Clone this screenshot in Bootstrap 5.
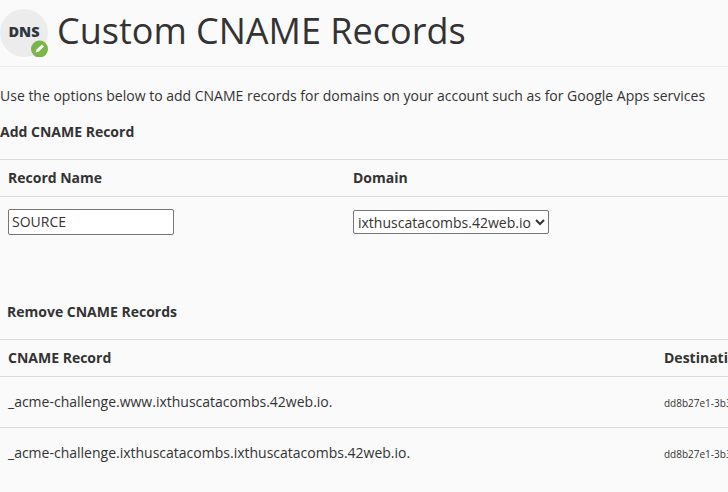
<!DOCTYPE html>
<html lang="en">
<head>
  <meta charset="UTF-8" />
  <meta name="viewport" content="width=device-width, initial-scale=1.0" />
  <title>Custom CNAME Records</title>
  <link href="https://cdn.jsdelivr.net/npm/bootstrap@5.3.0/dist/css/bootstrap.min.css" rel="stylesheet" />
  <style>
    html, body { height: 492px; overflow: hidden; }
    body { background: #fafafa; color: #333; font-family: "Open Sans", sans-serif; font-size: 14px; }
    .page-head { height: 67px; border-bottom: 1px solid #eaeaea; }
    .dns-logo { width: 48px; height: 48px; margin-top: 9px; position: relative; flex: none; }
    .page-title { font-family: "Open Sans", sans-serif; font-size: 36px; font-weight: 400; line-height: 45px; margin: 8px 0 0 9px; color: #333; }
    .intro { margin: 0; padding-top: 19px; line-height: 19px; }
    .sec-title { font-size: 14px; font-weight: 700; line-height: 19px; margin: 0; }
    .add-title { padding-top: 17px; height: 54px; }
    .remove-title { padding: 0 0 0 7px; height: 37px; margin-top: 0; }
    .rec-grid { display: grid; border-top: 1px solid #ddd; }
    .add-grid { grid-template-columns: 345px 1fr; }
    .rem-grid { grid-template-columns: 656px 1fr; overflow: hidden; }
    .rec-th { font-weight: 700; height: 37px; line-height: 36px; padding-left: 8px; border-bottom: 1px solid #ddd; white-space: nowrap; }
    .rec-td { height: 51px; padding: 15px 0 0 8px; line-height: 20px; border-bottom: 1px solid #ddd; white-space: nowrap; }
    .rec-td.last { border-bottom: 0; }
    .dest { font-size: 10px; padding-top: 16px; }
    .form-row { height: 105px; padding-top: 12px; }
    .src-input { width: 166px; height: 26px; padding: 0 3px 2px; border: 1px solid #767676; border-radius: 2px; background: #fff; color: #333; font-size: 14px; display: block; }
    .dom-select { width: 196px; height: 24px; margin-top: 1px; padding: 0; border: 1px solid #767676; border-radius: 2px; background-color: #fff; color: #333; font-size: 14px; display: block; }
  </style>
</head>
<body>

<!-- Header -->
<div class="page-head d-flex">
  <div class="dns-logo">
    <svg width="48" height="48" viewBox="0 0 48 48">
      <circle cx="24" cy="24" r="24" fill="#ececec"/>
      <text x="24" y="28" text-anchor="middle" font-family="Open Sans, sans-serif" font-weight="800" font-size="14.5" fill="#2f3640">DNS</text>
      <circle cx="39.5" cy="40" r="8.5" fill="#7ab648"/>
      <path d="M35.5 43.5l1-3 5.5-5 2 2-5.5 5.2z" fill="#fff"/>
    </svg>
  </div>
  <h1 class="page-title">Custom CNAME Records</h1>
</div>

<p class="intro">Use the options below to add CNAME records for domains on your account such as for Google Apps services</p>

<!-- Add -->
<h2 class="sec-title add-title">Add CNAME Record</h2>
<div class="rec-grid add-grid">
  <div class="rec-th">Record Name</div>
  <div class="rec-th">Domain</div>
  <div class="form-row ps-2"><input class="src-input" type="text" value="SOURCE"></div>
  <div class="form-row ps-2">
    <select class="dom-select"><option>ixthuscatacombs.42web.io</option></select>
  </div>
</div>

<!-- Remove -->
<h2 class="sec-title remove-title">Remove CNAME Records</h2>
<div class="rec-grid rem-grid">
  <div class="rec-th">CNAME Record</div>
  <div class="rec-th">Destination</div>
  <div class="rec-td">_acme-challenge.www.ixthuscatacombs.42web.io.</div>
  <div class="rec-td dest">dd8b27e1-3b3</div>
  <div class="rec-td last">_acme-challenge.ixthuscatacombs.ixthuscatacombs.42web.io.</div>
  <div class="rec-td last dest">dd8b27e1-3b3</div>
</div>

<script src="https://cdn.jsdelivr.net/npm/bootstrap@5.3.0/dist/js/bootstrap.bundle.min.js"></script>
</body>
</html>
